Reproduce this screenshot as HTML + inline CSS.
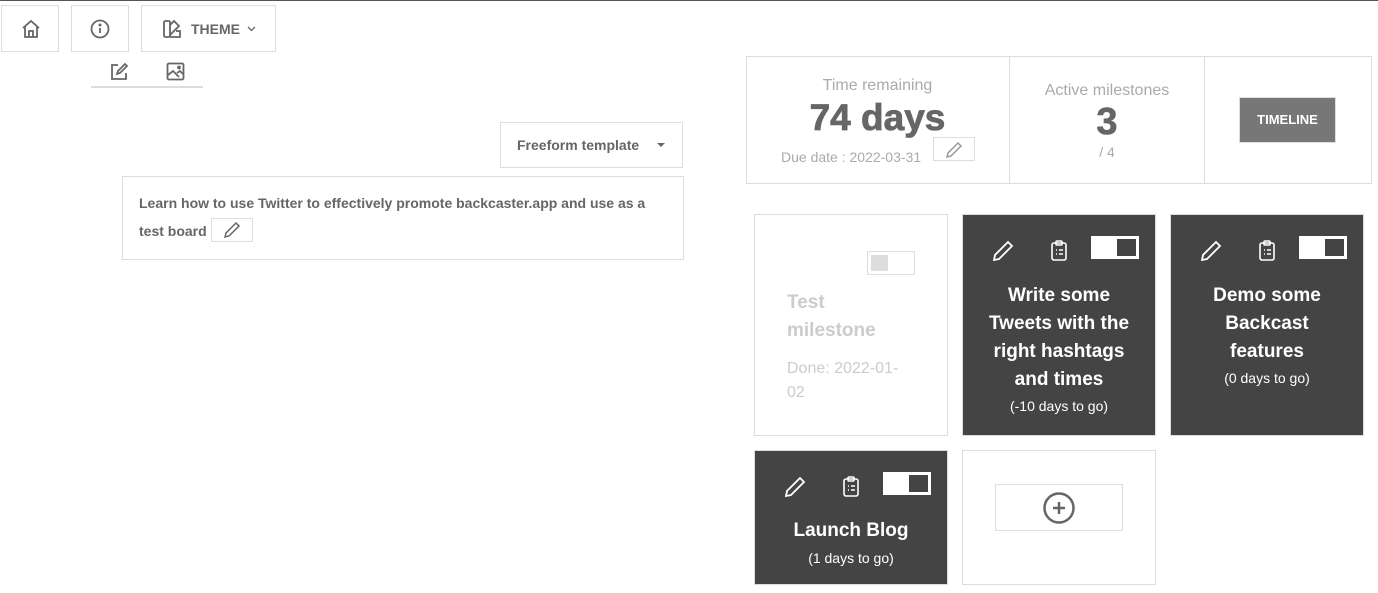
<!DOCTYPE html>
<html><head><style>
*{margin:0;padding:0;box-sizing:border-box}
body{width:1378px;height:593px;background:#fff;font-family:"Liberation Sans",Arial,sans-serif;position:relative;overflow:hidden;color:#666}
.a{position:absolute}
.bx{position:absolute;border:1px solid #ddd;background:#fff}
.dark{position:absolute;background:#444;border:1px solid #ddd;color:#fff;text-align:center}
.tg{position:absolute;width:48px;height:23px;background:#fff}
.tg i{position:absolute;right:3px;top:3px;width:19px;height:17px;background:#444}
.t{font-weight:bold;font-size:19px;line-height:28px}
.s{font-size:14px;line-height:20px}
</style></head><body>
<div class="a" style="left:0;top:0;width:1378px;height:1px;background:#555"></div>
<div class="bx" style="left:1px;top:5px;width:58px;height:47px"><svg class="a" style="left:19px;top:13px" width="20" height="20" viewBox="0 0 20 20" fill="none" stroke="#666" stroke-width="1.8"><path d="M2 9 L10 2 L18 9 M4 7.5 V18 H16 V7.5 M8 18 V12 H12 V18"/></svg></div>
<div class="bx" style="left:71px;top:5px;width:58px;height:47px"><svg class="a" style="left:18px;top:13px" width="20" height="20" viewBox="0 0 20 20" fill="none" stroke="#666" stroke-width="1.8"><circle cx="10" cy="10" r="8.5"/><path d="M10 9 V14"/><circle cx="10" cy="6" r=".6" fill="#666"/></svg></div>
<div class="bx" style="left:141px;top:5px;width:135px;height:47px"><svg class="a" style="left:20px;top:13px" width="20" height="20" viewBox="0 0 20 20" fill="none" stroke="#666" stroke-width="1.8"><rect x="2" y="2" width="6" height="16" rx="1.5"/><path d="M8 6 L12 2 L17 7 L8 16 M8 18 H18 V12 H14"/></svg><span class="a" style="left:49px;top:15px;font-size:14px;font-weight:bold;color:#666">THEME</span><svg class="a" style="left:105px;top:20px" width="9" height="6" viewBox="0 0 9 6" fill="none" stroke="#666" stroke-width="1.3"><path d="M1 1 L4.5 4.5 L8 1"/></svg></div>
<svg class="a" style="left:109px;top:62px" width="20" height="20" viewBox="0 0 20 20" fill="none" stroke="#666" stroke-width="1.8"><path d="M9 3 H3 V17 H17 V11 M8 12 L9 9 L16 2 L18 4 L11 11 Z"/></svg>
<svg class="a" style="left:166px;top:62px" width="19" height="19" viewBox="0 0 19 19" fill="none" stroke="#666" stroke-width="1.8"><rect x="1.5" y="1.5" width="16" height="16" rx="1.5"/><path d="M2 13 L7 9 L13 15 M11 11 L14 9 L17 12"/><circle cx="13" cy="5.5" r="1"/></svg>
<div class="a" style="left:91px;top:86px;width:112px;height:2px;background:#ddd"></div>

<div class="bx" style="left:500px;top:122px;width:183px;height:46px"><span class="a" style="left:16px;top:14px;font-size:14px;font-weight:bold;color:#666">Freeform template</span><span class="a" style="left:156px;top:20px;width:0;height:0;border-left:4px solid transparent;border-right:4px solid transparent;border-top:4px solid #666"></span></div>
<div class="bx" style="left:122px;top:176px;width:562px;height:84px"><div class="a" style="left:16px;top:12px;width:530px;font-size:14px;font-weight:bold;line-height:28px;color:#666">Learn how to use Twitter to effectively promote backcaster.app and use as a test board <span style="display:inline-block;vertical-align:middle;width:42px;height:24px;border:1px solid #ddd;position:relative;top:-2px"><svg class="a" style="left:10px;top:1px" width="20" height="20" viewBox="0 0 20 20" fill="none" stroke="#666" stroke-width="1.5"><path d="M3 17 L4 13 L14 3 L17 6 L7 16 Z"/></svg></span></div></div>

<div class="bx" style="left:746px;top:56px;width:626px;height:128px"></div>
<div class="a" style="left:1009px;top:56px;width:1px;height:128px;background:#ddd"></div>
<div class="a" style="left:1204px;top:56px;width:1px;height:128px;background:#ddd"></div>
<div class="a" style="left:746px;top:77px;width:263px;text-align:center;font-size:16px;color:#aaa">Time remaining</div>
<div class="a" style="left:746px;top:97px;width:263px;text-align:center;font-size:37px;font-weight:bold;color:#666;-webkit-text-stroke:0.8px #666">74 days</div>
<div class="a" style="left:781px;top:149px;font-size:14px;color:#aaa">Due date : 2022-03-31</div>
<div class="bx" style="left:933px;top:137px;width:42px;height:24px"><svg class="a" style="left:10px;top:2px" width="20" height="20" viewBox="0 0 20 20" fill="none" stroke="#999" stroke-width="1.5"><path d="M3 17 L4 13 L14 3 L17 6 L7 16 Z"/></svg></div>
<div class="a" style="left:1010px;top:82px;width:194px;text-align:center;font-size:16px;color:#aaa">Active milestones</div>
<div class="a" style="left:1010px;top:101px;width:194px;text-align:center;font-size:38px;font-weight:bold;color:#666;-webkit-text-stroke:0.6px #666">3</div>
<div class="a" style="left:1010px;top:144px;width:194px;text-align:center;font-size:14px;color:#aaa">/ 4</div>
<div class="a" style="left:1239px;top:97px;width:97px;height:46px;background:#777;border:1px solid #ddd;color:#fff;font-size:13px;font-weight:bold;text-align:center;line-height:44px">TIMELINE</div>

<div class="bx" style="left:754px;top:214px;width:194px;height:222px">
<div class="a" style="left:112px;top:36px;width:48px;height:24px;border:1px solid #ddd"><i class="a" style="left:3px;top:3px;width:17px;height:16px;background:#ddd"></i></div>
<div class="a" style="left:32px;top:74px;font-size:19px;font-weight:bold;color:#ccc;line-height:28px">Test<br>milestone</div>
<div class="a" style="left:32px;top:142px;font-size:16px;color:#ccc;line-height:24px">Done: 2022-01-<br>02</div>
</div>

<div class="dark" style="left:962px;top:214px;width:194px;height:222px">
<svg class="a" style="left:28px;top:24px" width="24" height="24" viewBox="0 0 24 24" fill="none" stroke="#fff" stroke-width="1.8"><path d="M3 21 L4 16 L17 3 L21 7 L8 20 Z"/></svg>
<svg class="a" style="left:86px;top:25px" width="20" height="22" viewBox="0 0 20 22" fill="none" stroke="#fff" stroke-width="1.6"><rect x="3" y="3" width="14" height="17" rx="2"/><rect x="7" y="1" width="6" height="4" rx="1"/><path d="M7 10h1M10 10h4M7 14h1M10 14h4"/></svg>
<div class="tg" style="left:128px;top:21px"><i></i></div>
<div class="a t" style="left:0;top:67px;width:192px">Write some<br>Tweets with the<br>right hashtags<br>and times</div>
<div class="a s" style="left:0;top:181px;width:192px">(-10 days to go)</div>
</div>

<div class="dark" style="left:1170px;top:214px;width:194px;height:222px">
<svg class="a" style="left:28px;top:24px" width="24" height="24" viewBox="0 0 24 24" fill="none" stroke="#fff" stroke-width="1.8"><path d="M3 21 L4 16 L17 3 L21 7 L8 20 Z"/></svg>
<svg class="a" style="left:86px;top:25px" width="20" height="22" viewBox="0 0 20 22" fill="none" stroke="#fff" stroke-width="1.6"><rect x="3" y="3" width="14" height="17" rx="2"/><rect x="7" y="1" width="6" height="4" rx="1"/><path d="M7 10h1M10 10h4M7 14h1M10 14h4"/></svg>
<div class="tg" style="left:128px;top:21px"><i></i></div>
<div class="a t" style="left:0;top:67px;width:192px">Demo some<br>Backcast<br>features</div>
<div class="a s" style="left:0;top:153px;width:192px">(0 days to go)</div>
</div>

<div class="dark" style="left:754px;top:450px;width:194px;height:135px">
<svg class="a" style="left:28px;top:24px" width="24" height="24" viewBox="0 0 24 24" fill="none" stroke="#fff" stroke-width="1.8"><path d="M3 21 L4 16 L17 3 L21 7 L8 20 Z"/></svg>
<svg class="a" style="left:86px;top:25px" width="20" height="22" viewBox="0 0 20 22" fill="none" stroke="#fff" stroke-width="1.6"><rect x="3" y="3" width="14" height="17" rx="2"/><rect x="7" y="1" width="6" height="4" rx="1"/><path d="M7 10h1M10 10h4M7 14h1M10 14h4"/></svg>
<div class="tg" style="left:128px;top:21px"><i></i></div>
<div class="a t" style="left:0;top:66px;width:192px">Launch Blog</div>
<div class="a s" style="left:0;top:97px;width:192px">(1 days to go)</div>
</div>

<div class="bx" style="left:962px;top:450px;width:194px;height:135px">
<div class="bx" style="left:32px;top:33px;width:128px;height:47px"><svg class="a" style="left:46px;top:6px" width="34" height="34" viewBox="0 0 34 34" fill="none" stroke="#666" stroke-width="2.5"><circle cx="17" cy="17" r="14.5"/><path d="M17 11 V23 M11 17 H23"/></svg></div>
</div>
</body></html>
